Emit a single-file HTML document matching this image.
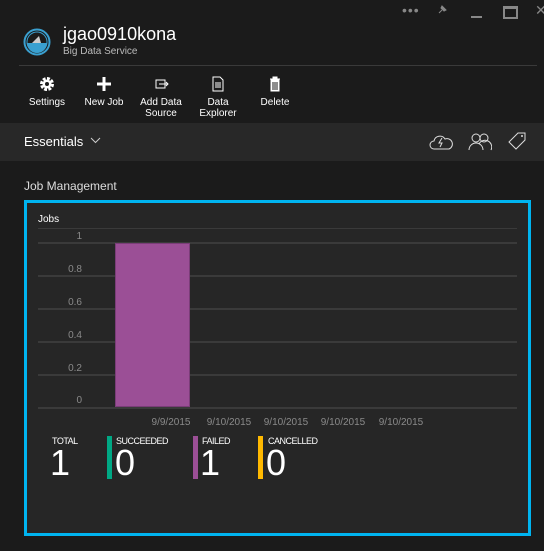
<!DOCTYPE html>
<html><head><style>
body{margin:0;width:544px;height:551px;background:#1b1b1b;font-family:"Liberation Sans",sans-serif;color:#fff;position:relative;overflow:hidden}
.a{position:absolute;white-space:nowrap}
.tb{position:absolute;top:76px;text-align:center;font-size:10px;line-height:11px;width:60px}
.tb svg{display:block;margin:0 auto 5px}
.gl{position:absolute;left:38px;width:479px;height:2px;background:#3a3a3a}
.yl{position:absolute;width:30px;left:52px;text-align:right;font-size:10px;color:#8a8a8a}
.dl{position:absolute;top:417px;font-size:10px;color:#8a8a8a;width:60px;text-align:center}
.st{position:absolute;top:436px;font-size:9px;letter-spacing:-.5px}
.sn{position:absolute;top:443px;font-size:36px;line-height:40px}
.cb{position:absolute;top:436px;width:5px;height:43px}
</style></head><body>
<div class="a" style="left:402px;top:2px;color:#888;font-size:14px;letter-spacing:1px">•••</div>
<svg class="a" style="left:436px;top:4px" width="12" height="12"><path d="M3 9l3-3M5 3l4 4M6 2l4 4-2 1-3-3z" stroke="#888" fill="#888"/></svg>
<div class="a" style="left:471px;top:16px;width:11px;height:2px;background:#888"></div>
<div class="a" style="left:503px;top:6px;width:11px;height:8px;border:2px solid #888;border-top-width:3px"></div>
<div class="a" style="left:535px;top:2px;color:#888;font-size:14px">✕</div>
<svg class="a" style="left:23px;top:28px" width="28" height="28"><circle cx="14" cy="14" r="12.5" fill="#1b1b1b" stroke="#3aa0d0" stroke-width="2"/><path d="M4 15h20a10 10 0 0 1-20 0z" fill="#3aa0d0"/><circle cx="14" cy="14" r="10" fill="none" stroke="#3aa0d0" stroke-width="1"/><path d="M9 15l7-7 2 7z" fill="#ccc"/></svg>
<div class="a" style="left:63px;top:24px;font-size:18px">jgao0910kona</div>
<div class="a" style="left:63px;top:46px;font-size:10px;color:#bbb">Big Data Service</div>
<div class="a" style="left:19px;top:65px;width:518px;height:1px;background:#3a3a3a"></div>
<div class="tb" style="left:17px"><svg width="16" height="16" viewBox="0 0 16 16"><circle cx="8" cy="8" r="5" fill="none" stroke="#fff" stroke-width="4" stroke-dasharray="2.6 1.3"/><circle cx="8" cy="8" r="4.5" fill="#fff"/><circle cx="8" cy="8" r="2" fill="#1b1b1b"/></svg>Settings</div>
<div class="tb" style="left:74px"><svg width="16" height="16"><path d="M8 1v14M1 8h14" stroke="#fff" stroke-width="3"/></svg>New Job</div>
<div class="tb" style="left:131px"><svg width="16" height="16"><rect x="3" y="4" width="9" height="8" fill="none" stroke="#fff"/><path d="M6 8h9M13 6l2 2-2 2" stroke="#fff" fill="none"/></svg>Add Data<br>Source</div>
<div class="tb" style="left:188px"><svg width="16" height="16"><path d="M3 1h7l3 3v11H3z M5 7h6M5 9h6M5 11h6" stroke="#fff" fill="none"/></svg>Data<br>Explorer</div>
<div class="tb" style="left:245px"><svg width="16" height="16"><path d="M3 3h10M6 3V1h4v2M4 4h8v11H4z" stroke="#fff" fill="#fff"/><path d="M6 6v8M8 6v8M10 6v8" stroke="#1b1b1b"/></svg>Delete</div>
<div class="a" style="left:0;top:123px;width:544px;height:38px;background:#282828"></div>
<div class="a" style="left:24px;top:134px;font-size:13px">Essentials</div>
<svg class="a" style="left:90px;top:137px" width="11" height="8"><path d="M1 1l4.5 4.5L10 1" stroke="#ccc" fill="none"/></svg>
<svg class="a" style="left:428px;top:132px" width="28" height="20"><path d="M6 17a4 4 0 0 1 0-8 6 6 0 0 1 11-2 5 5 0 0 1 4 10z" stroke="#ddd" fill="none"/><path d="M14 6l-3 5h3l-2 4" stroke="#ddd" fill="none"/></svg>
<svg class="a" style="left:468px;top:132px" width="24" height="20"><circle cx="8" cy="6" r="4" stroke="#ddd" fill="none"/><circle cx="16" cy="6" r="4" stroke="#ddd" fill="none"/><path d="M1 18a7 7 0 0 1 14 0M11 12a6 6 0 0 1 12 6" stroke="#ddd" fill="none"/></svg>
<svg class="a" style="left:506px;top:131px" width="22" height="20"><path d="M12 2h7v7L10 18 3 11z" stroke="#ddd" fill="none"/><circle cx="16" cy="5" r="1" fill="#ddd"/></svg>
<div class="a" style="left:24px;top:179px;font-size:12px;color:#ddd">Job Management</div>
<div class="a" style="left:24px;top:200px;width:501px;height:330px;border:3px solid #00b4f0;background:#262626"></div>
<div class="a" style="left:38px;top:214px;font-size:10px">Jobs</div>
<div class="gl" style="top:228px;height:1px"></div>
<div class="gl" style="top:242px"></div><div class="gl" style="top:275px"></div><div class="gl" style="top:308px"></div><div class="gl" style="top:341px"></div><div class="gl" style="top:374px"></div><div class="gl" style="top:407px"></div>
<div class="yl" style="top:231px">1</div><div class="yl" style="top:264px">0.8</div><div class="yl" style="top:297px">0.6</div><div class="yl" style="top:330px">0.4</div><div class="yl" style="top:363px">0.2</div><div class="yl" style="top:395px">0</div>
<div class="a" style="left:115px;top:243px;width:75px;height:164px;background:#9b4f96;border:1px solid #7a3d78;box-sizing:border-box"></div>
<div class="dl" style="left:141px">9/9/2015</div><div class="dl" style="left:199px">9/10/2015</div><div class="dl" style="left:256px">9/10/2015</div><div class="dl" style="left:313px">9/10/2015</div><div class="dl" style="left:371px">9/10/2015</div>
<div class="st" style="left:52px">TOTAL</div><div class="sn" style="left:50px">1</div>
<div class="cb" style="left:107px;background:#00a884"></div><div class="st" style="left:116px">SUCCEEDED</div><div class="sn" style="left:115px">0</div>
<div class="cb" style="left:193px;background:#9b4f96"></div><div class="st" style="left:202px">FAILED</div><div class="sn" style="left:200px">1</div>
<div class="cb" style="left:258px;background:#ffb900"></div><div class="st" style="left:268px">CANCELLED</div><div class="sn" style="left:266px">0</div>
</body></html>
